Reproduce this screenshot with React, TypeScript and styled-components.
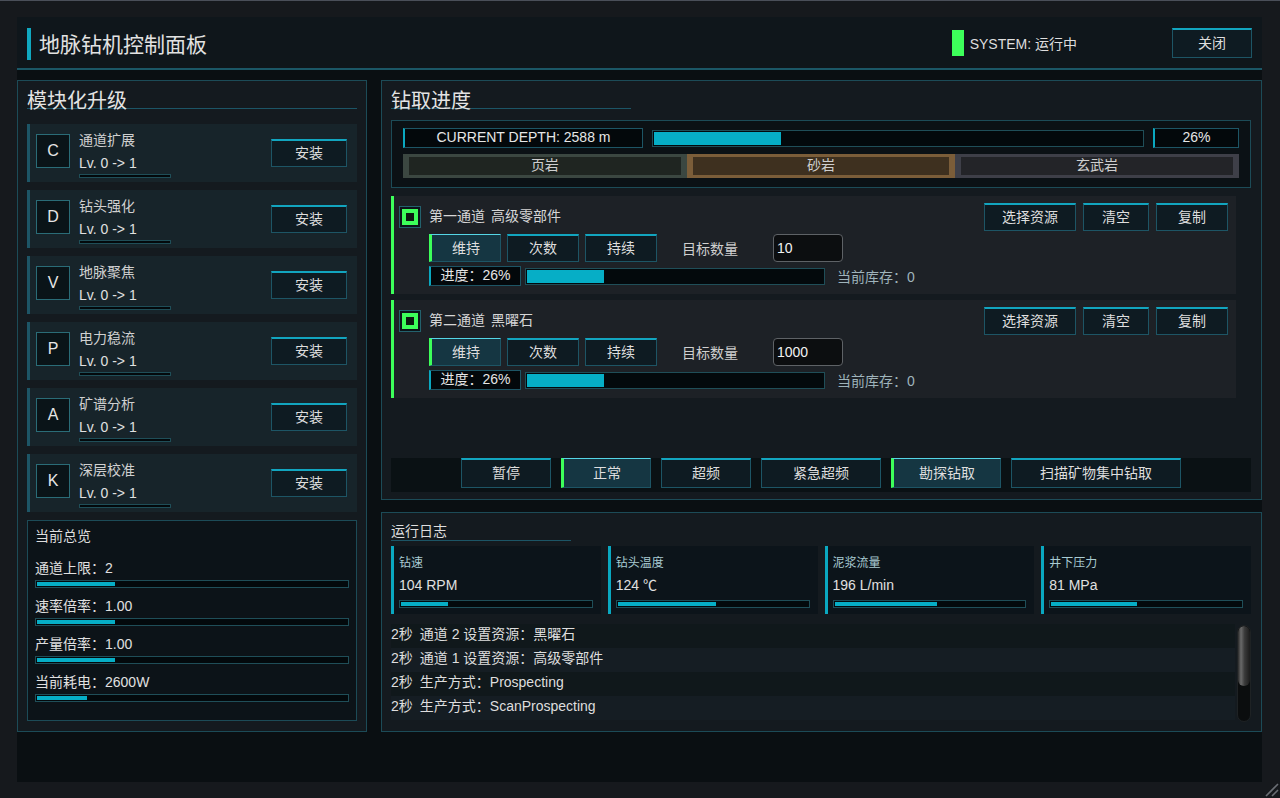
import styled, { createGlobalStyle, css } from "styled-components";

const GlobalStyle = createGlobalStyle`
    html, body {
        margin: 0;
        padding: 0;
        background: #16191d;
    }
    body {
        font-family: "Liberation Sans", "Noto Sans CJK SC", sans-serif;
        font-size: 14px;
        color: #dcdcdc;
    }
    *, *::before, *::after {
        box-sizing: border-box;
    }
`;

const Page = styled.div`
    position: relative;
    height: 798px;
    border-top: 1px solid #4a4f59;
    padding: 16px 0 0 17px;
    overflow: hidden;
`;

const Window = styled.div`
    width: 1245px;
    height: 765px;
    background: #0a0f12;
    display: flex;
    flex-direction: column;
`;

const Header = styled.header`
    height: 53px;
    flex-shrink: 0;
    background: #0f161b;
    border-bottom: 2px solid #1b5766;
    display: flex;
    align-items: center;
    padding: 0 10px;
`;

const TitleAccent = styled.span`
    width: 4px;
    height: 32px;
    margin-top: 3px;
    background: #10a8c0;
`;

const AppTitle = styled.h1`
    margin: 0 0 0 8px;
    font-size: 21px;
    font-weight: normal;
    color: #e2e2e2;
    flex: 1;
`;

const Status = styled.div`
    display: flex;
    align-items: center;
    gap: 6px;
    margin-right: 95px;
    color: #dedede;
`;

const StatusLed = styled.span`
    width: 12px;
    height: 26px;
    background: #3dff5a;
`;

const Btn = styled.button<{ $w: number; $h?: number; $active?: boolean }>`
    width: ${(p) => p.$w}px;
    height: ${(p) => p.$h ?? 28}px;
    flex-shrink: 0;
    padding: 0 0 3px;
    background: #0e1b22;
    border: 1px solid #1d5565;
    border-top: 2px solid #12a5bf;
    color: #dedede;
    font-family: inherit;
    font-size: 14px;
    cursor: pointer;

    ${(p) =>
        p.$active &&
        css`
            background: #153642;
            border-top: 1px solid #55d6e6;
            border-left: 3px solid #3dff5a;
        `}
`;

const Body = styled.main`
    display: flex;
    gap: 14px;
    padding-top: 10px;
`;

const Panel = styled.section`
    background: #141a1f;
    border: 1px solid #1c4b57;
`;

const LeftPanel = styled(Panel)`
    width: 350px;
    height: 652px;
    padding: 0 9px;
    display: flex;
    flex-direction: column;
`;

const SectionTitle = styled.h2<{ $w: number }>`
    margin: 10px 0 0;
    width: ${(p) => p.$w}px;
    height: 17px;
    font-size: 20px;
    line-height: 20px;
    font-weight: normal;
    color: #e4e4e4;
    border-bottom: 1px solid #1c5566;
    box-sizing: content-box;
`;

const ModuleList = styled.div`
    display: flex;
    flex-direction: column;
    gap: 8px;
    margin-top: 15px;
`;

const ModuleItem = styled.div`
    height: 58px;
    display: flex;
    align-items: center;
    background: #17242a;
    border-left: 3px solid #1d5566;
    padding: 0 10px 0 6px;
`;

const ModIcon = styled.span`
    width: 34px;
    height: 34px;
    margin-bottom: 4px;
    display: flex;
    align-items: center;
    justify-content: center;
    border: 1px solid #2a6c77;
    background: #0a1418;
    font-size: 16px;
    color: #e6e6e6;
`;

const ModInfo = styled.div`
    flex: 1;
    margin: 2px 0 0 9px;
    display: flex;
    flex-direction: column;
`;

const ModName = styled.div`
    line-height: 20px;
    color: #d0d0d0;
`;

const ModLevel = styled.div`
    line-height: 20px;
    margin-top: 3px;
    color: #e0e0e0;
`;

const Track = styled.div<{ $h: number; $w?: number }>`
    height: ${(p) => p.$h}px;
    width: ${(p) => (p.$w ? `${p.$w}px` : "auto")};
    flex-shrink: 0;
    border: 1px solid #1f4e58;
    background: #03090c;
    padding: 1px;
`;

const Fill = styled.div`
    height: 100%;
    background: #06aec6;
`;

const ModTrack = styled(Track)`
    margin-top: 1px;
    padding: 0;
`;

const Overview = styled.div`
    margin-top: 8px;
    height: 201px;
    border: 1px solid #1c4b57;
    background: #0c1318;
    padding: 5px 7px 0;
`;

const OverviewTitle = styled.div`
    line-height: 20px;
    color: #dedede;
`;

const OverviewList = styled.div`
    margin-top: 12px;
    display: flex;
    flex-direction: column;
    gap: 8px;
`;

const OverviewItem = styled.div`
    display: flex;
    flex-direction: column;
    gap: 2px;
    line-height: 20px;
    color: #e0e0e0;
`;

const RightCol = styled.div`
    width: 881px;
    display: flex;
    flex-direction: column;
    gap: 12px;
`;

const DrillPanel = styled(Panel)`
    height: 420px;
    padding: 0 10px 7px 9px;
    display: flex;
    flex-direction: column;
`;

const DepthBox = styled.div`
    margin-top: 11px;
    height: 68px;
    border: 1px solid #1c4b57;
    background: #0b1115;
    padding: 7px 11px 0;
`;

const DepthRow = styled.div`
    display: flex;
    align-items: center;
    height: 20px;
`;

const TagBox = styled.div<{ $w: number }>`
    width: ${(p) => p.$w}px;
    height: 20px;
    flex-shrink: 0;
    border: 1px solid #1d5565;
    border-left: 2px solid #0aa8c0;
    background: #03080b;
    text-align: center;
    line-height: 17px;
    color: #e6e6e6;
`;

const DepthTrack = styled(Track)`
    flex: 1;
    margin: 0 9px;
`;

const StrataRow = styled.div`
    display: flex;
    margin-top: 6px;
    height: 24px;
`;

const strataColors = {
    shale: { edge: "#3b4741", face: "#1f2521" },
    sand: { edge: "#7b5d39", face: "#3e301f" },
    basalt: { edge: "#3e3f48", face: "#232428" },
};

const Stratum = styled.div<{ $grow: number; $kind: keyof typeof strataColors }>`
    flex: ${(p) => p.$grow};
    border-style: solid;
    border-width: 3px 6px;
    border-color: ${(p) => strataColors[p.$kind].edge};
    background: ${(p) => strataColors[p.$kind].face};
    text-align: center;
    line-height: 17px;
    color: #cfcfcf;
`;

const ChannelList = styled.div`
    flex: 1;
    margin-top: 8px;
    padding-right: 15px;
    display: flex;
    flex-direction: column;
    gap: 6px;
`;

const Channel = styled.div`
    height: 98px;
    background: #1d2126;
    border-left: 3px solid #3dff5a;
    padding: 7px 8px 0 5px;
`;

const ChannelHead = styled.div`
    display: flex;
    align-items: center;
    height: 28px;
    gap: 7px;
`;

const Check = styled.span`
    width: 22px;
    height: 22px;
    flex-shrink: 0;
    border: 1px solid #23616d;
    background: #0c1519;
    display: flex;
    align-items: center;
    justify-content: center;

    &::after {
        content: "";
        width: 16px;
        height: 16px;
        border: 4px solid #3dff5a;
        background: #0d1a10;
    }
`;

const ChannelTitle = styled.div`
    flex: 1;
    margin: 0 0 4px 1px;
    display: flex;
    gap: 6px;
    color: #d6d6d6;
`;

const ChannelRow = styled.div`
    display: flex;
    align-items: center;
    margin-left: 30px;
`;

const ModeRow = styled(ChannelRow)`
    margin-top: 3px;
    height: 28px;
    gap: 6px;
`;

const TargetLabel = styled.span`
    width: 85px;
    margin-left: 19px;
    color: #d0d0d0;
`;

const TargetInput = styled.input`
    width: 70px;
    height: 28px;
    border: 1px solid #5e6266;
    border-radius: 4px;
    background: #0c0e10;
    color: #f2f2f2;
    font-family: inherit;
    font-size: 14px;
    padding: 0 3px;
    outline: none;
`;

const ProgRow = styled(ChannelRow)`
    margin-top: 4px;
    height: 20px;
`;

const ProgTrack = styled(Track)`
    margin-left: 4px;
`;

const Stock = styled.span`
    margin-left: 12px;
    color: #9fb4bb;
`;

const ModeBar = styled.div`
    height: 34px;
    background: #0a1114;
    display: flex;
    justify-content: center;
    align-items: flex-start;
    gap: 10px;
`;

const LogPanel = styled(Panel)`
    height: 220px;
    padding: 0 10px 0 9px;
`;

const LogTitle = styled.div`
    margin-top: 8px;
    width: 180px;
    height: 19px;
    line-height: 20px;
    border-bottom: 1px solid #1c5566;
    box-sizing: content-box;
    color: #dedede;
`;

const StatGrid = styled.div`
    margin-top: 5px;
    display: grid;
    grid-template-columns: repeat(4, 1fr);
    gap: 7px;
`;

const StatCard = styled.div`
    height: 68px;
    background: #0c141a;
    border-left: 3px solid #0aa8c0;
    padding: 9px 8px 0 5px;
`;

const StatLabel = styled.div`
    font-size: 12px;
    line-height: 16px;
    color: #a9cbd3;
`;

const StatValue = styled.div`
    margin-top: 4px;
    line-height: 20px;
    color: #e0e0e0;
`;

const StatTrack = styled(Track)`
    margin-top: 5px;
`;

const LogArea = styled.div`
    margin-top: 10px;
    display: flex;
    gap: 2px;
`;

const LogList = styled.div`
    flex: 1;
`;

const LogRow = styled.div<{ $odd: boolean }>`
    height: 24px;
    line-height: 21px;
    background: ${(p) => (p.$odd ? "#151d23" : "#10181b")};
    color: #dedede;
    display: flex;
    gap: 7px;
`;

const ScrollTrack = styled.div`
    width: 14px;
    height: 97px;
    margin-top: 1px;
    border-radius: 7px;
    background: #0b0d0e;
    border: 1px solid #1e2224;
    overflow: hidden;
`;

const ScrollThumb = styled.div`
    height: 60px;
    border-radius: 7px;
    background: linear-gradient(90deg, #2a2a2a, #6a6a6a 25%, #3a3a3a 55%, #1c1c1c);
`;

const Grip = styled.svg`
    position: absolute;
    right: 1px;
    bottom: 1px;
`;

const modules = [
    { key: "C", name: "通道扩展" },
    { key: "D", name: "钻头强化" },
    { key: "V", name: "地脉聚焦" },
    { key: "P", name: "电力稳流" },
    { key: "A", name: "矿谱分析" },
    { key: "K", name: "深层校准" },
];

const overview = [
    { label: "通道上限：2", pct: 25 },
    { label: "速率倍率：1.00", pct: 25 },
    { label: "产量倍率：1.00", pct: 25 },
    { label: "当前耗电：2600W", pct: 16 },
];

const channels = [
    { title: "第一通道", resource: "高级零部件", target: "10" },
    { title: "第二通道", resource: "黑曜石", target: "1000" },
];

const modes = [
    { label: "暂停", w: 90 },
    { label: "正常", w: 90, active: true },
    { label: "超频", w: 90 },
    { label: "紧急超频", w: 120 },
    { label: "勘探钻取", w: 110, active: true },
    { label: "扫描矿物集中钻取", w: 170 },
];

const stats = [
    { label: "钻速", value: "104 RPM", pct: 25 },
    { label: "钻头温度", value: "124 ℃", pct: 52 },
    { label: "泥浆流量", value: "196 L/min", pct: 54 },
    { label: "井下压力", value: "81 MPa", pct: 45 },
];

const logs = [
    "通道 2 设置资源：黑曜石",
    "通道 1 设置资源：高级零部件",
    "生产方式：Prospecting",
    "生产方式：ScanProspecting",
];

const Bar = ({ pct, h, w }: { pct: number; h: number; w?: number }) => (
    <Track $h={h} $w={w}>
        <Fill style={{ width: `${pct}%` }} />
    </Track>
);

const App = () => {
    return (
        <>
            <GlobalStyle />
            <Page>
                <Window>
                    <Header>
                        <TitleAccent />
                        <AppTitle>地脉钻机控制面板</AppTitle>
                        <Status>
                            <StatusLed />
                            SYSTEM: 运行中
                        </Status>
                        <Btn $w={80} $h={30}>
                            关闭
                        </Btn>
                    </Header>
                    <Body>
                        <LeftPanel>
                            <SectionTitle $w={330}>模块化升级</SectionTitle>
                            <ModuleList>
                                {modules.map((m) => (
                                    <ModuleItem key={m.key}>
                                        <ModIcon>{m.key}</ModIcon>
                                        <ModInfo>
                                            <ModName>{m.name}</ModName>
                                            <ModLevel>Lv. 0 -&gt; 1</ModLevel>
                                            <ModTrack $h={4} $w={92} />
                                        </ModInfo>
                                        <Btn $w={76}>安装</Btn>
                                    </ModuleItem>
                                ))}
                            </ModuleList>
                            <Overview>
                                <OverviewTitle>当前总览</OverviewTitle>
                                <OverviewList>
                                    {overview.map((o) => (
                                        <OverviewItem key={o.label}>
                                            {o.label}
                                            <Bar pct={o.pct} h={8} />
                                        </OverviewItem>
                                    ))}
                                </OverviewList>
                            </Overview>
                        </LeftPanel>
                        <RightCol>
                            <DrillPanel>
                                <SectionTitle $w={240}>钻取进度</SectionTitle>
                                <DepthBox>
                                    <DepthRow>
                                        <TagBox $w={240}>CURRENT DEPTH: 2588 m</TagBox>
                                        <DepthTrack $h={17}>
                                            <Fill style={{ width: "26%" }} />
                                        </DepthTrack>
                                        <TagBox $w={86}>26%</TagBox>
                                    </DepthRow>
                                    <StrataRow>
                                        <Stratum $grow={284} $kind="shale">
                                            页岩
                                        </Stratum>
                                        <Stratum $grow={268} $kind="sand">
                                            砂岩
                                        </Stratum>
                                        <Stratum $grow={284} $kind="basalt">
                                            玄武岩
                                        </Stratum>
                                    </StrataRow>
                                </DepthBox>
                                <ChannelList>
                                    {channels.map((c) => (
                                        <Channel key={c.title}>
                                            <ChannelHead>
                                                <Check />
                                                <ChannelTitle>
                                                    <span>{c.title}</span>
                                                    <span>{c.resource}</span>
                                                </ChannelTitle>
                                                <Btn $w={92}>选择资源</Btn>
                                                <Btn $w={66}>清空</Btn>
                                                <Btn $w={72}>复制</Btn>
                                            </ChannelHead>
                                            <ModeRow>
                                                <Btn $w={72} $active>
                                                    维持
                                                </Btn>
                                                <Btn $w={72}>次数</Btn>
                                                <Btn $w={72}>持续</Btn>
                                                <TargetLabel>目标数量</TargetLabel>
                                                <TargetInput defaultValue={c.target} />
                                            </ModeRow>
                                            <ProgRow>
                                                <TagBox $w={92}>进度：26%</TagBox>
                                                <ProgTrack $h={17} $w={300}>
                                                    <Fill style={{ width: "26%" }} />
                                                </ProgTrack>
                                                <Stock>当前库存：0</Stock>
                                            </ProgRow>
                                        </Channel>
                                    ))}
                                </ChannelList>
                                <ModeBar>
                                    {modes.map((m) => (
                                        <Btn key={m.label} $w={m.w} $h={30} $active={m.active}>
                                            {m.label}
                                        </Btn>
                                    ))}
                                </ModeBar>
                            </DrillPanel>
                            <LogPanel>
                                <LogTitle>运行日志</LogTitle>
                                <StatGrid>
                                    {stats.map((s) => (
                                        <StatCard key={s.label}>
                                            <StatLabel>{s.label}</StatLabel>
                                            <StatValue>{s.value}</StatValue>
                                            <StatTrack $h={8}>
                                                <Fill style={{ width: `${s.pct}%` }} />
                                            </StatTrack>
                                        </StatCard>
                                    ))}
                                </StatGrid>
                                <LogArea>
                                    <LogList>
                                        {logs.map((l, i) => (
                                            <LogRow key={l} $odd={i % 2 === 1}>
                                                <span>2秒</span>
                                                <span>{l}</span>
                                            </LogRow>
                                        ))}
                                    </LogList>
                                    <ScrollTrack>
                                        <ScrollThumb />
                                    </ScrollTrack>
                                </LogArea>
                            </LogPanel>
                        </RightCol>
                    </Body>
                </Window>
                <Grip width="16" height="16" viewBox="0 0 16 16">
                    <path d="M15 3 L3 15 M15 9 L9 15" stroke="#6a6e74" strokeWidth="1.6" />
                </Grip>
            </Page>
        </>
    );
};

export default App;
